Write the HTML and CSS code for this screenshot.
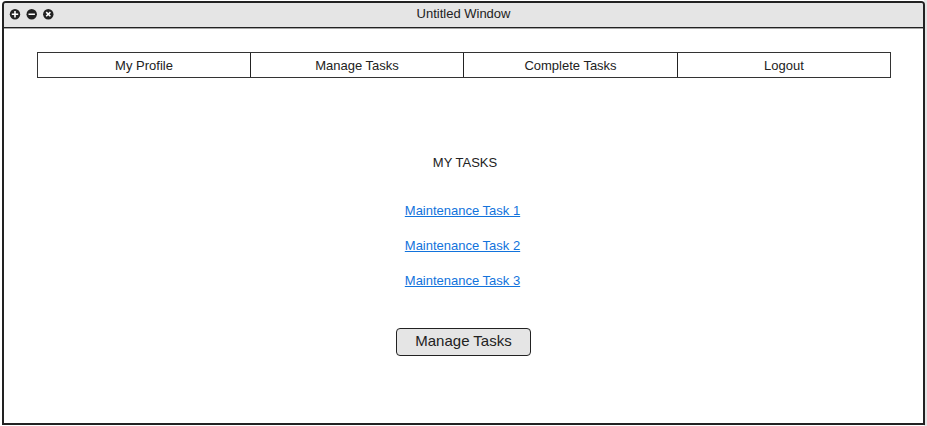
FILE: index.html
```html
<!DOCTYPE html>
<html lang="en">
<head>
<meta charset="utf-8">
<title>Untitled Window</title>
<link rel="stylesheet" href="styles.css">
</head>
<body>
<div class="window">
  <header class="titlebar">
    <svg class="controls" viewBox="0 0 46 12">
      <circle cx="6" cy="6.2" r="5.2"/><path d="M6 3v6.4M2.8 6.2h6.4"/>
      <circle cx="22.7" cy="6.2" r="5.2"/><path d="M19.5 6.2h6.4"/>
      <circle cx="39.3" cy="6.2" r="5.2"/><path d="M37.2 4.1l4.2 4.2M41.4 4.1l-4.2 4.2"/>
    </svg>
    <h1 class="title">Untitled Window</h1>
  </header>
  <nav class="menu">
    <a>My Profile</a><a>Manage Tasks</a><a>Complete Tasks</a><a>Logout</a>
  </nav>
  <main class="tasks">
    <h2>MY TASKS</h2>
    <ul>
      <li><a href="#">Maintenance Task 1</a></li>
      <li><a href="#">Maintenance Task 2</a></li>
      <li><a href="#">Maintenance Task 3</a></li>
    </ul>
    <button>Manage Tasks</button>
  </main>
</div>
</body>
</html>
```
FILE: styles.css
```css
* { box-sizing: border-box; margin: 0; padding: 0; }
html { background: #fff; }
body { width: 927px; height: 426px; overflow: hidden; padding: 1px 2px 1px; background: linear-gradient(90deg, #fff 924px, #e5e5e5 924px); color: #222; font: 13px/16px "Liberation Sans", Arial, sans-serif; }
.window { height: 424px; border: 2px solid #222; border-radius: 4px 4px 0 0; overflow: hidden; background: #fff; }
.titlebar { display: grid; grid-template-columns: 60px 1fr 60px; height: 25px; background: #e5e5e5; border-bottom: 1px solid #222; box-shadow: 0 1px #a6a6a6; }
.controls { width: 46px; height: 12px; margin: 5px 0 0 5px; }
.controls circle { fill: #222; }
.controls path { stroke: #fff; stroke-width: 1.6; fill: none; }
.title { font: inherit; text-align: center; padding-top: 3px; }
.menu { display: grid; grid-template-columns: 212px 213px 214px 1fr; width: 854px; height: 26px; margin: 24px 0 0 33px; border: 1px solid #333; }
.menu a { height: 24px; padding-top: 1px; text-align: center; line-height: 23px; }
.menu a + a { border-left: 1px solid #222; }
.tasks { display: flex; flex-direction: column; align-items: center; padding-top: 77px; }
h2 { font: inherit; margin-left: 3px; }
ul { list-style: none; margin: 32px 2px 0 0; }
li { height: 35px; }
li a { color: #1273dc; }
button { width: 135px; height: 28px; margin-top: 20px; padding-bottom: 2px; border: 1px solid #222; border-radius: 4px; background: #e5e5e5; color: #222; font: 15px/18px "Liberation Sans", Arial, sans-serif; }
```
